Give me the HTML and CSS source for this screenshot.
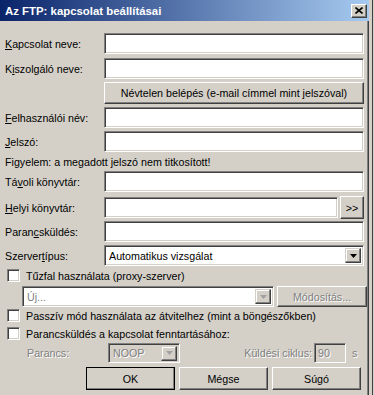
FILE: index.html
```html
<!DOCTYPE html>
<html>
<head>
    <meta charset="UTF-8">
    <title>Az FTP: kapcsolat beállításai</title>
    <link rel="stylesheet" href="styles.css">
</head>
<body>
    <div class="window">
        <div class="titlebar">
            <span class="title">Az FTP: kapcsolat beállításai</span>
            <span class="close-btn">
                <svg width="8" height="7" viewBox="0 0 8 7"><path d="M0.5 0.5 L7.5 6.5 M7.5 0.5 L0.5 6.5" stroke="#000" stroke-width="1.6" fill="none"/></svg>
            </span>
        </div>
        <div class="dialog">
            <div class="row r-edit1">
                <span class="lbl"><u>K</u>apcsolat neve:</span>
                <div class="edit"></div>
            </div>
            <div class="row r-edit">
                <span class="lbl">K<u>i</u>szolgáló neve:</span>
                <div class="edit"></div>
            </div>
            <div class="row r-anon">
                <span class="lbl"></span>
                <div class="btn btn-wide">Névtelen belépés (e-mail címmel mint jelszóval)</div>
            </div>
            <div class="row r-edit3">
                <span class="lbl"><u>F</u>elhasználói név:</span>
                <div class="edit"></div>
            </div>
            <div class="row r-edit3">
                <span class="lbl"><u>J</u>elszó:</span>
                <div class="edit"></div>
            </div>
            <div class="row note">Figyelem: a megadott jelszó nem titkosított!</div>
            <div class="row r-remote">
                <span class="lbl">Tá<u>v</u>oli könyvtár:</span>
                <div class="edit"></div>
            </div>
            <div class="row r-local">
                <span class="lbl"><u>H</u>elyi könyvtár:</span>
                <div class="edit edit-short"></div>
                <div class="btn btn-browse">&gt;&gt;</div>
            </div>
            <div class="row r-cmd">
                <span class="lbl">Paran<u>c</u>sküldés:</span>
                <div class="edit"></div>
            </div>
            <div class="row r-edit3">
                <span class="lbl">Szerver<u>t</u>ípus:</span>
                <div class="edit combo">
                    <span class="combo-text">Automatikus vizsgálat</span>
                    <span class="combo-arrow"><svg width="7" height="4" viewBox="0 0 7 4"><path d="M0 0 H7 L3.5 4 Z" fill="#000"/></svg></span>
                </div>
            </div>
            <div class="row check-row r-firewall">
                <span class="checkbox"></span>
                <span>Tűzfal használata (proxy-szerver)</span>
            </div>
            <div class="row r-proxy">
                <div class="edit combo combo-proxy disabled-field">
                    <span class="combo-text dis">Új...</span>
                    <span class="combo-arrow"><svg width="7" height="4" viewBox="0 0 7 4"><path d="M0 0 H7 L3.5 4 Z" fill="#a0a0a0"/></svg></span>
                </div>
                <div class="btn btn-modify dis">Módosítás...</div>
            </div>
            <div class="row check-row r-passive">
                <span class="checkbox"></span>
                <span>Passzív mód használata az átvitelhez (mint a böngészőkben)</span>
            </div>
            <div class="row check-row r-keep">
                <span class="checkbox"></span>
                <span>Parancsküldés a kapcsolat fenntartásához:</span>
            </div>
            <div class="row r-keepalive">
                <span class="lbl-sub dis">Parancs:</span>
                <div class="edit combo combo-noop gray-field">
                    <span class="combo-text dis">NOOP</span>
                    <span class="combo-arrow"><svg width="7" height="4" viewBox="0 0 7 4"><path d="M0 0 H7 L3.5 4 Z" fill="#a0a0a0"/></svg></span>
                </div>
                <span class="cycle-lbl dis">Küldési ciklus:</span>
                <div class="edit edit-cycle gray-field"><span class="dis">90</span></div>
                <span class="unit dis">s</span>
            </div>
            <div class="row buttons">
                <div class="btn btn-action btn-default">OK</div>
                <div class="btn btn-action">Mégse</div>
                <div class="btn btn-action">Súgó</div>
            </div>
        </div>
    </div>
</body>
</html>
```

FILE: styles.css
```css
body {
    margin: 0;
    width: 374px;
    height: 395px;
    overflow: hidden;
    background-color: #d4d0c8;
    background-image: linear-gradient(to right, transparent 372px, #404040 372px, #404040 373px, transparent 373px);
    font-family: "Liberation Sans", Arial, sans-serif;
    font-size: 10.7px;
    color: #000;
}
.window {
    width: 367px;
    height: 395px;
    background-color: #d4d0c8;
    border-right: 1px solid #808080;
    box-shadow: 1px 0 0 #404040;
    margin-right: 2px;
}
.titlebar {
    height: 21px;
    width: 369px;
    background: linear-gradient(to right, #0a246a, #a6caf0);
    display: flex;
    align-items: center;
    justify-content: space-between;
    box-sizing: border-box;
    padding: 0 2px 0 5px;
}
.title {
    color: #fff;
    font-weight: bold;
    font-size: 11.4px;
}
.close-btn {
    width: 16px;
    height: 14px;
    box-sizing: border-box;
    background: #d4d0c8;
    border: 1px solid;
    border-color: #fff #404040 #404040 #fff;
    box-shadow: inset -1px -1px #808080;
    display: flex;
    align-items: center;
    justify-content: center;
}
.close-btn svg {
    display: block;
}
.dialog {
    padding-top: 12px;
}
.row {
    display: flex;
    align-items: center;
    padding-left: 5px;
    white-space: nowrap;
}
.lbl {
    width: 99px;
    flex-shrink: 0;
}
.edit {
    width: 260px;
    height: 21px;
    box-sizing: border-box;
    background: #fff;
    border: 1px solid;
    border-color: #808080 #fff #fff #808080;
    box-shadow: inset 1px 1px #404040, inset -1px -1px #d4d0c8;
}
.btn {
    box-sizing: border-box;
    background: #d4d0c8;
    border: 1px solid;
    border-color: #fff #404040 #404040 #fff;
    box-shadow: inset -1px -1px #808080, inset 1px 1px #d4d0c8;
    display: flex;
    align-items: center;
    justify-content: center;
}
.dis {
    color: #808080;
    text-shadow: 1px 1px 0 #fff;
}

.r-edit1 { height: 21px; }
.r-edit { height: 21px; margin-top: 4px; }
.r-anon { height: 22px; margin-top: 3px; }
.btn-wide {
    width: 260px;
    height: 22px;
}
.r-edit3 { height: 21px; margin-top: 3px; }
.note { height: 18px; padding-top: 1px; box-sizing: border-box; }
.r-remote { height: 21px; margin-top: 1px; }
.r-local { height: 23px; margin-top: 4px; }
.edit-short { width: 234px; }
.btn-browse {
    width: 24px;
    height: 23px;
    margin-left: 2px;
}
.r-cmd { height: 21px; margin-top: 2px; }

.combo {
    display: flex;
    align-items: center;
    justify-content: space-between;
    padding: 2px;
}
.combo-text {
    padding-left: 2px;
}
.combo-arrow {
    width: 16px;
    height: 15px;
    box-sizing: border-box;
    background: #d4d0c8;
    border: 1px solid;
    border-color: #d4d0c8 #404040 #404040 #d4d0c8;
    box-shadow: inset -1px -1px #808080, inset 1px 1px #fff;
    display: flex;
    align-items: center;
    justify-content: center;
}
.combo-arrow svg { display: block; }

.check-row { padding-left: 7px; }
.checkbox {
    width: 13px;
    height: 13px;
    box-sizing: border-box;
    background: #fff;
    border: 1px solid;
    border-color: #808080 #fff #fff #808080;
    box-shadow: inset 1px 1px #404040, inset -1px -1px #d4d0c8;
    margin-right: 6px;
    flex-shrink: 0;
}
.r-firewall { height: 15px; margin-top: 2px; }
.r-proxy { height: 21px; margin-top: 3px; padding-left: 22px; }
.combo-proxy { width: 252px; }
.disabled-field { background: #fff; }
.btn-modify {
    width: 90px;
    height: 21px;
    margin-left: 3px;
}
.r-passive { height: 15px; margin-top: 1px; }
.r-keep { height: 15px; margin-top: 3px; }
.r-keepalive { height: 20px; margin-top: 2px; padding-left: 27px; }
.lbl-sub { width: 81px; }
.gray-field { background: #d4d0c8; }
.combo-noop { width: 72px; height: 20px; }
.cycle-lbl {
    width: 132px;
    text-align: right;
}
.edit-cycle {
    width: 32px;
    height: 20px;
    margin-left: 2px;
    padding: 2px 3px;
    line-height: 14px;
}
.unit { margin-left: 6px; }

.buttons {
    margin-top: 4px;
    padding-left: 86px;
    gap: 4px;
}
.btn-action {
    width: 89px;
    height: 23px;
}
.btn-default {
    outline: 1px solid #000;
    outline-offset: -1px;
}
```
